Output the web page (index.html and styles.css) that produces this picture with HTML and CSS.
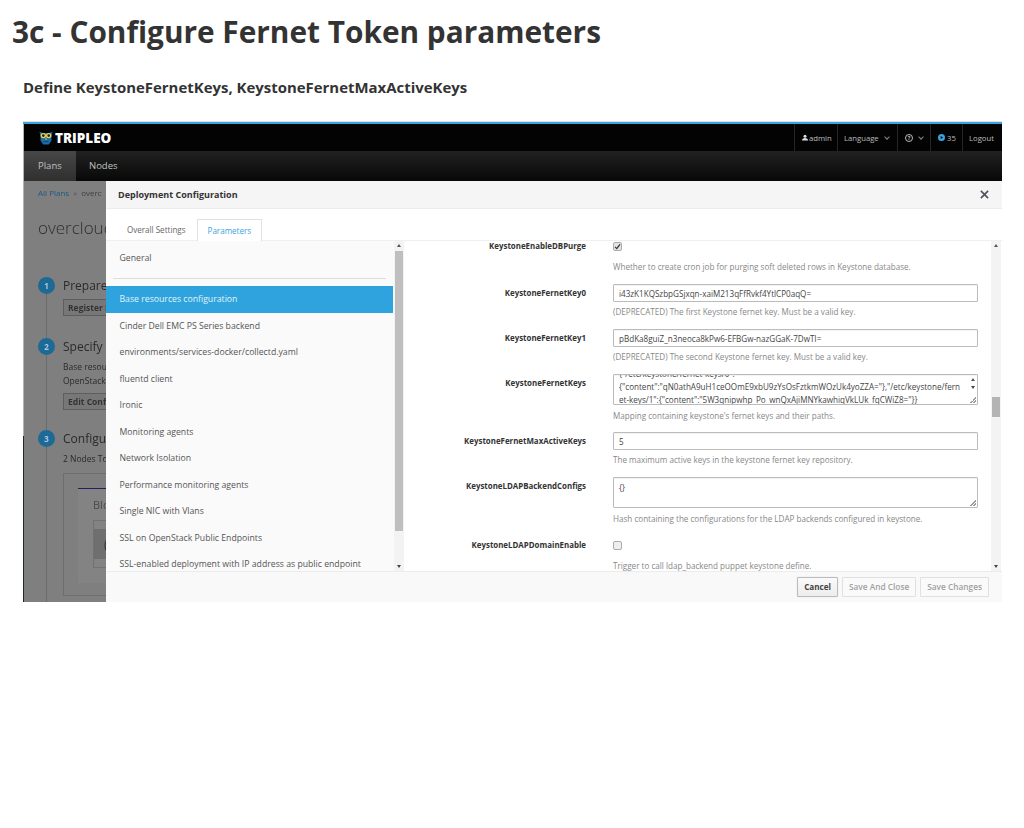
FILE: index.html
```html
<!DOCTYPE html>
<html lang="en">
<head>
  <meta charset="UTF-8">
  <title>3c - Configure Fernet Token parameters</title>
  <link rel="stylesheet" href="styles.css">
</head>
<body>
  <h1>3c - Configure Fernet Token parameters</h1>
  <h2>Define KeystoneFernetKeys, KeystoneFernetMaxActiveKeys</h2>

  <div class="shot">
    <div class="masthead">
      <div class="brand">
        <svg class="owl" viewBox="0 0 14 14" width="14" height="14">
          <path d="M1.5 5 L0.5 0.8 L4 2 H10 L13.5 0.8 L12.5 5 V9.5 L9.8 13.5 H4.2 L1.5 9.5 Z" fill="#1c6ca8"/>
          <circle cx="4.3" cy="4.6" r="2.7" fill="#f0d24a"/>
          <circle cx="9.7" cy="4.6" r="2.7" fill="#f0d24a"/>
          <circle cx="4.3" cy="4.6" r="1.3" fill="#10202c"/>
          <circle cx="9.7" cy="4.6" r="1.3" fill="#10202c"/>
          <path d="M6 7.4 H8 L7 9.2 Z" fill="#f0d24a"/>
          <path d="M4.5 10.6 H9.5" stroke="#0c3c60" stroke-width="0.8"/>
        </svg>
        <span>TRIPLEO</span>
      </div>
      <div class="util">
        <div class="util-item item-admin">
          <svg viewBox="0 0 8 8" width="6" height="7"><circle cx="4" cy="2.2" r="2" fill="#ddd"/><path d="M0 8 Q0 4.6 4 4.6 Q8 4.6 8 8 Z" fill="#ddd"/></svg>admin
        </div>
        <div class="util-item item-lang">Language <span class="chev"></span></div>
        <div class="util-item item-help">
          <span class="help-icon">?</span>
          <span class="chev"></span>
        </div>
        <div class="util-item item-count">
          <svg viewBox="0 0 10 10" width="7" height="7"><circle cx="5" cy="5" r="5" fill="#39a5dc"/><path d="M3.8 2.8 L7.2 5 L3.8 7.2 Z" fill="#000"/></svg>35
        </div>
        <div class="util-item item-logout">Logout</div>
      </div>
    </div>

    <div class="navbar">
      <div class="nav-link active">Plans</div>
      <div class="nav-link">Nodes</div>
    </div>

    <div class="backdrop">
      <div class="crumbs"><span class="crumb-link">All Plans</span> <span class="crumb-sep">»</span> overc</div>
      <div class="plan-title">overcloud</div>

      <div class="step step-one">
        <div class="step-num">1</div>
        <div class="step-body">
          <div class="step-title">Prepare</div>
          <div class="bg-btn">Register N</div>
        </div>
      </div>
      <div class="step step-two">
        <div class="step-num">2</div>
        <div class="step-body">
          <div class="step-title">Specify D</div>
          <div class="step-text">Base resou<br>OpenStack</div>
          <div class="bg-btn">Edit Confi</div>
        </div>
      </div>
      <div class="step step-three">
        <div class="step-num">3</div>
        <div class="step-body">
          <div class="step-title">Configur</div>
          <div class="step-text">2 Nodes To</div>
          <div class="role-box">
            <div class="role-card">
              <div class="role-name">Blo</div>
              <div class="role-count"><div class="role-strip">(</div></div>
            </div>
          </div>
        </div>
      </div>
    </div>

    <div class="modal">
      <div class="modal-head">
        <span>Deployment Configuration</span>
        <svg viewBox="0 0 10 10" width="9" height="9"><path d="M1 1 L9 9 M9 1 L1 9" stroke="#4d5258" stroke-width="1.8" fill="none"/></svg>
      </div>
      <div class="tabs">
        <div class="tab">Overall Settings</div>
        <div class="tab tab-on">Parameters</div>
      </div>
      <div class="modal-body">
        <div class="sidebar">
          <div class="side-list">
            <div class="side-item">General</div>
            <div class="side-rule"></div>
            <div class="side-item selected">Base resources configuration</div>
            <div class="side-item">Cinder Dell EMC PS Series backend</div>
            <div class="side-item">environments/services-docker/collectd.yaml</div>
            <div class="side-item">fluentd client</div>
            <div class="side-item">Ironic</div>
            <div class="side-item">Monitoring agents</div>
            <div class="side-item">Network Isolation</div>
            <div class="side-item">Performance monitoring agents</div>
            <div class="side-item">Single NIC with Vlans</div>
            <div class="side-item">SSL on OpenStack Public Endpoints</div>
            <div class="side-item">SSL-enabled deployment with IP address as public endpoint</div>
          </div>
          <div class="scrollbar side-scroll">
            <span class="arrow up"></span>
            <span class="thumb"></span>
            <span class="arrow down"></span>
          </div>
        </div>

        <div class="params">
          <div class="param-list">
            <div class="field field-check field-first">
              <label>KeystoneEnableDBPurge</label>
              <div class="control">
                <span class="check checked">
                  <svg viewBox="0 0 10 10" width="7" height="7"><path d="M1.5 5.5 L4 8 L8.5 2" stroke="#333" stroke-width="1.8" fill="none"/></svg>
                </span>
                <p class="help">Whether to create cron job for purging soft deleted rows in Keystone database.</p>
              </div>
            </div>
            <div class="field">
              <label>KeystoneFernetKey0</label>
              <div class="control">
                <div class="input">i43zK1KQSzbpGSjxqn-xaiM213qFfRvkf4YtlCP0aqQ=</div>
                <p class="help">(DEPRECATED) The first Keystone fernet key. Must be a valid key.</p>
              </div>
            </div>
            <div class="field">
              <label>KeystoneFernetKey1</label>
              <div class="control">
                <div class="input">pBdKa8guiZ_n3neoca8kPw6-EFBGw-nazGGaK-7DwTI=</div>
                <p class="help">(DEPRECATED) The second Keystone fernet key. Must be a valid key.</p>
              </div>
            </div>
            <div class="field">
              <label>KeystoneFernetKeys</label>
              <div class="control">
                <div class="textarea scrolled">
                  <div>{"/etc/keystone/fernet-keys/0":</div>
                  <div>{"content":"qN0athA9uH1ceOOmE9xbU9zYsOsFztkmWOzUk4yoZZA="},"/etc/keystone/fern</div>
                  <div>et-keys/1":{"content":"5W3qnipwhp_Po_wnQxAjiMNYkawhiqVkLUk_fqCWiZ8="}}</div>
                  <span class="spin"><span class="arrow up"></span><span class="arrow down"></span></span>
                  <span class="grip"></span>
                </div>
                <p class="help">Mapping containing keystone's fernet keys and their paths.</p>
              </div>
            </div>
            <div class="field">
              <label>KeystoneFernetMaxActiveKeys</label>
              <div class="control">
                <div class="input">5</div>
                <p class="help">The maximum active keys in the keystone fernet key repository.</p>
              </div>
            </div>
            <div class="field">
              <label>KeystoneLDAPBackendConfigs</label>
              <div class="control">
                <div class="textarea">
                  <div>{}</div>
                  <span class="grip"></span>
                </div>
                <p class="help">Hash containing the configurations for the LDAP backends configured in keystone.</p>
              </div>
            </div>
            <div class="field field-check field-domain">
              <label>KeystoneLDAPDomainEnable</label>
              <div class="control">
                <span class="check"></span>
                <p class="help">Trigger to call ldap_backend puppet keystone define.</p>
              </div>
            </div>
          </div>
          <div class="scrollbar main-scroll">
            <span class="arrow up"></span>
            <span class="thumb"></span>
            <span class="arrow down"></span>
          </div>
        </div>
      </div>
      <div class="modal-foot">
        <div class="btn btn-cancel">Cancel</div>
        <div class="btn">Save And Close</div>
        <div class="btn">Save Changes</div>
      </div>
    </div>
  </div>
</body>
</html>
```

FILE: styles.css
```css
html, body {
  margin: 0;
  padding: 0;
  background: #fff;
}
body {
  font-family: 'Open Sans', sans-serif;
  color: #333;
  height: 828px;
  overflow: hidden;
}
h1 {
  margin: 0;
  padding: 11px 0 0 12px;
  font-size: 29.8px;
  line-height: 41px;
  font-weight: 700;
}
h2 {
  margin: 0;
  padding: 24px 0 0 23px;
  font-size: 14.95px;
  line-height: 22px;
  font-weight: 700;
}

/* screenshot frame, a bit soft like the scaled original */
.shot {
  position: relative;
  margin: 24px 0 0 23px;
  padding-left: 1px;
  width: 979px;
  height: 480px;
  box-sizing: border-box;
  border-top: 2px solid #39a5dc;
  box-shadow: 0 -1px 0 #e2e2e2;
  overflow: hidden;
  font-size: 9px;
  background: linear-gradient(#b4b4b4 312px, #1f2a2a 312px) left top / 1px 100% no-repeat, #7f7f7f;
  background-origin: padding-box;
  filter: blur(0.35px);
}
.masthead {
  height: 27px;
  background: #030303;
  display: flex;
  justify-content: space-between;
  color: #bbb;
}
.brand {
  display: flex;
  align-items: center;
  gap: 2px;
  padding-left: 15px;
  color: #fff;
  font-size: 13.5px;
  font-weight: 800;
}
.util {
  display: flex;
  font-size: 7.7px;
}
.util-item {
  display: flex;
  align-items: center;
  border-left: 1px solid #262626;
  box-sizing: border-box;
}
.item-admin { width: 43px; padding-left: 7px; gap: 1px; }
.item-lang { width: 60px; padding-left: 6px; }
.item-help { width: 33px; padding-left: 7px; gap: 5px; }
.item-count { width: 32px; padding-left: 7px; gap: 2px; }
.item-logout { width: 40px; padding-left: 6px; }
.help-icon {
  width: 8px;
  height: 8px;
  box-sizing: border-box;
  border: 1px solid #bbb;
  border-radius: 50%;
  font-size: 5.5px;
  font-weight: 700;
  line-height: 6px;
  text-align: center;
}
.chev {
  display: inline-block;
  width: 3px;
  height: 3px;
  margin: -2px 0 0 6px;
  border-right: 1px solid #888;
  border-bottom: 1px solid #888;
  transform: rotate(45deg);
}
.item-help .chev { margin-left: 1px; }

.navbar {
  height: 30px;
  display: flex;
  background: linear-gradient(#212121, #080808);
  color: #c0c0c0;
  font-size: 9.5px;
}
.nav-link {
  padding: 0 13px;
  line-height: 30px;
}
.nav-link.active {
  width: 52px;
  box-sizing: border-box;
  padding-left: 14px;
  background: linear-gradient(#474747, #2f2f2f);
}

/* page behind the dialog, only the part that shows */
.backdrop {
  position: relative;
  width: 82px;
  height: 421px;
  padding-left: 14px;
  box-sizing: border-box;
  color: #333;
  white-space: nowrap;
  overflow: hidden;
}
.backdrop::before {
  content: "";
  position: absolute;
  left: 22px;
  top: 100px;
  bottom: 0;
  width: 1px;
  background: #6b6b6b;
}
.crumbs {
  padding-top: 6px;
  line-height: 11px;
  font-size: 8px;
  color: #3f3f3f;
}
.crumb-link { color: #1d5a80; }
.crumb-sep { color: #555; margin: 0 2px; }
.plan-title {
  margin-top: 18px;
  font-size: 17px;
  line-height: 24px;
  font-weight: 300;
  color: #2e2e2e;
}
.step {
  position: relative;
  display: flex;
  gap: 8px;
}
.step-one { margin-top: 36px; }
.step-two { margin-top: 21px; }
.step-three { margin-top: 19px; }
.step-num {
  flex: none;
  width: 17px;
  height: 17px;
  margin-top: 1px;
  border-radius: 50%;
  background: #1d6a96;
  color: #a9c8da;
  font-size: 8px;
  font-weight: 700;
  line-height: 17px;
  text-align: center;
}
.step-title {
  padding-top: 1px;
  font-size: 12px;
  line-height: 18px;
  color: #2a2a2a;
}
.step-text {
  margin-top: 4px;
  font-size: 8.5px;
  line-height: 14px;
  color: #2a2a2a;
}
.bg-btn {
  display: inline-block;
  margin-top: 4px;
  padding: 0 4px;
  line-height: 15px;
  font-size: 8.5px;
  font-weight: 700;
  color: #333;
  border: 1px solid #5e5e5e;
  background: #777;
}
.step-two .bg-btn { margin-top: 5px; }
.role-box {
  margin-top: 7px;
  width: 120px;
  height: 123px;
  padding: 14px 0 0 14px;
  box-sizing: border-box;
  border: 1px solid #6e6e6e;
}
.role-card {
  height: 94px;
  border-top: 1px solid #2e1a5e;
  background: #838383;
  padding-left: 15px;
  color: #4a4a4a;
}
.role-name {
  padding-top: 8px;
  font-size: 11px;
  line-height: 16px;
}
.role-count {
  margin-top: 7px;
  height: 48px;
  padding-top: 8px;
  box-sizing: border-box;
  border: 1px solid #727272;
}
.role-strip {
  height: 30px;
  background: #6f6f6f;
  padding-left: 10px;
  font-size: 14px;
  line-height: 30px;
  color: #333;
}

/* dialog */
.modal {
  position: absolute;
  left: 83px;
  top: 57px;
  right: 0;
  bottom: 0;
  display: flex;
  flex-direction: column;
  background: #fff;
}
.modal-head {
  height: 28px;
  box-sizing: border-box;
  padding: 0 13px 0 12px;
  display: flex;
  justify-content: space-between;
  align-items: center;
  background: #f5f5f5;
  border-bottom: 1px solid #ececec;
  font-size: 9px;
  font-weight: 700;
  color: #333;
}
.tabs {
  height: 32px;
  box-sizing: border-box;
  padding: 10px 0 0 10px;
  display: flex;
  border-bottom: 1px solid #f0f0f0;
}
.tab {
  padding: 0 11px;
  line-height: 22px;
  font-size: 8.05px;
  color: #666;
}
.tab-on {
  height: 22px;
  padding: 0 10px;
  box-sizing: border-box;
  border: 1px solid #e2e2e2;
  border-bottom: none;
  background: #fff;
  color: #39a5dc;
  line-height: 21px;
}
.modal-body {
  flex: 1;
  min-height: 0;
  display: flex;
}
.sidebar {
  width: 298px;
  display: flex;
  background: #fafafa;
}
.side-list {
  width: 288px;
  overflow: hidden;
  white-space: nowrap;
}
.side-item {
  height: 26.5px;
  line-height: 26.5px;
  padding-left: 13.5px;
  font-size: 8.7px;
  color: #555;
}
.side-item:first-child {
  height: 32px;
  line-height: 34px;
}
.side-rule {
  margin: 5px 8px 7px 7px;
  border-top: 1px solid #ddd;
}
.side-item.selected {
  margin-right: 1px;
  background: #2ea3dd;
  color: #e4f3fb;
}
.scrollbar {
  position: relative;
  width: 10px;
  display: flex;
  flex-direction: column;
  align-items: center;
  background: #f3f3f3;
  flex: none;
}
.scrollbar .arrow { position: absolute; left: 2.5px; }
.scrollbar .up { top: 3px; }
.scrollbar .down { bottom: 3px; }
.arrow {
  display: block;
  width: 0;
  height: 0;
  border-left: 2.5px solid transparent;
  border-right: 2.5px solid transparent;
}
.arrow.up { border-bottom: 3px solid #555; }
.arrow.down { border-top: 3px solid #444; }
.thumb {
  display: block;
  width: 8px;
  background: #bfbfbf;
}
.side-scroll .thumb { height: 280px; margin-top: 10px; }
.main-scroll { margin-right: 1px; }
.main-scroll .thumb { height: 20px; margin-top: 156px; background: #b4b4b4; }

.params {
  flex: 1;
  min-width: 0;
  display: flex;
  background: #fff;
}
.param-list {
  flex: 1;
  overflow: hidden;
}
.field {
  display: grid;
  grid-template-columns: 182px 365px;
  column-gap: 27px;
  margin-top: 11px;
}
.field-first { margin-top: -2px; }
.field-domain { margin-top: 14px; }
.field label {
  text-align: right;
  font-size: 7.9px;
  font-weight: 700;
  color: #333;
  line-height: 18px;
}
.field-check label { line-height: 14px; }
.control { min-width: 0; }
.input, .textarea {
  box-sizing: border-box;
  border: 1px solid #bbb;
  border-radius: 1px;
  padding: 0 5px;
  font-size: 8.1px;
  color: #444;
  background: #fff;
  white-space: nowrap;
  overflow: hidden;
  box-shadow: inset 0 1px 1px rgba(0, 0, 0, 0.05);
}
.input {
  height: 18px;
  line-height: 17px;
}
.textarea {
  position: relative;
  height: 31px;
  line-height: 13px;
  padding-top: 3px;
}
.textarea.scrolled { padding-top: 0; }
.scrolled div:first-child { margin-top: -8px; }
.spin {
  position: absolute;
  right: 2px;
  top: 3px;
  display: flex;
  flex-direction: column;
  gap: 5px;
}
.grip {
  position: absolute;
  right: 1px;
  bottom: 1px;
  width: 6px;
  height: 6px;
  background: linear-gradient(135deg, transparent 50%, #999 50%, #999 60%, transparent 60%, transparent 75%, #999 75%, #999 85%, transparent 85%);
}
.help {
  margin: 4px 0 0;
  font-size: 8.1px;
  line-height: 12px;
  color: #888;
  white-space: nowrap;
}
.textarea + .help {
  margin-top: 5px;
  margin-bottom: -1px;
}
.check + .help { margin-top: 10px; }
.check {
  display: flex;
  align-items: center;
  justify-content: center;
  box-sizing: border-box;
  width: 9px;
  height: 9px;
  margin-top: 3px;
  border: 1px solid #aaa;
  border-radius: 2px;
  background: #efefef;
}
.check.checked { background: #e4e4e4; }

.modal-foot {
  height: 31px;
  box-sizing: border-box;
  border-top: 1px solid #ececec;
  background: #f9f9f9;
  padding: 5px 13px 0 0;
  display: flex;
  justify-content: flex-end;
  gap: 4px;
}
.btn {
  height: 20px;
  box-sizing: border-box;
  padding: 0 6px;
  border: 1px solid #e0e0e0;
  border-radius: 1px;
  line-height: 18px;
  font-size: 8.3px;
  font-weight: 600;
  color: #a0a0a0;
  background: #fafafa;
}
.btn-cancel {
  border-color: #bbb;
  color: #444;
  font-size: 8.1px;
  font-weight: 700;
  background: linear-gradient(#fafafa, #ededed);
  box-shadow: 0 0 1px rgba(0, 0, 0, 0.2);
}
```
